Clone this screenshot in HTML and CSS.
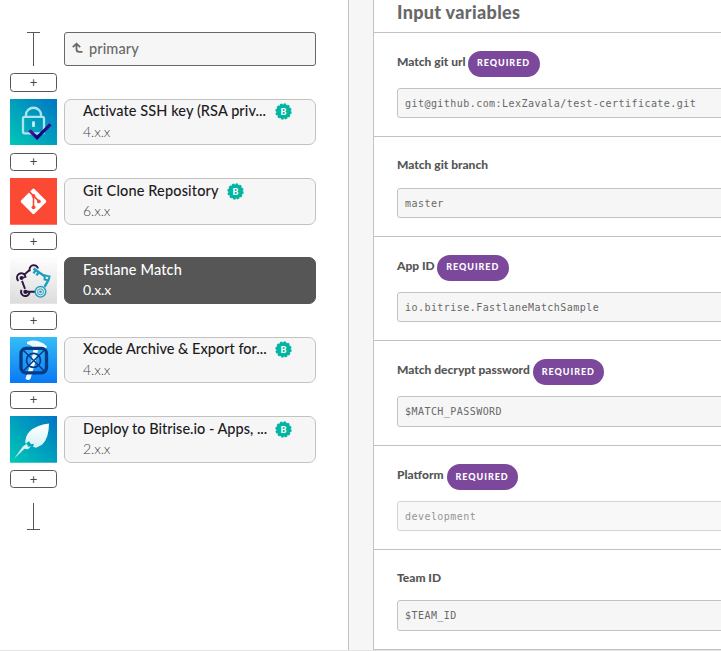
FILE: index.html
```html
<!DOCTYPE html>
<html lang="en">
<head>
<meta charset="utf-8">
<title>Workflow editor</title>
<link rel="stylesheet" href="styles.css">
</head>
<body>
<svg class="defs" width="0" height="0" aria-hidden="true">
  <defs>
    <linearGradient id="teal" x1="0" y1="1" x2="1" y2="0"><stop offset="0" stop-color="#00c9b7"/><stop offset="1" stop-color="#0075c4"/></linearGradient>
    <linearGradient id="blue" x1="0" y1="0" x2="0" y2="1"><stop offset="0" stop-color="#35bdf8"/><stop offset="1" stop-color="#0878f4"/></linearGradient>
    <linearGradient id="gray" x1="0" y1="0" x2="0" y2="1"><stop offset="0" stop-color="#fefefe"/><stop offset="1" stop-color="#dcdcdc"/></linearGradient>
    <linearGradient id="feather" x1="0" y1="0" x2="0" y2="1"><stop offset="0" stop-color="#ffffff"/><stop offset="1" stop-color="#c4ecf1"/></linearGradient>
    <linearGradient id="check" x1="0" y1="0" x2="1" y2="0"><stop offset="0" stop-color="#5a1296"/><stop offset=".4" stop-color="#12007c"/><stop offset="1" stop-color="#3a0d92"/></linearGradient>
    <symbol id="seal" viewBox="0 0 16 16">
      <circle cx="8" cy="8" r="6.9" fill="#00b5a1"/>
      <circle cx="8" cy="8" r="7" fill="none" stroke="#00b5a1" stroke-width="1.4" stroke-dasharray="2.3 1.365"/>
    </symbol>
  </defs>
</svg>
<div class="app">
  <section class="workflow">
    <div class="row start">
      <div class="cap cap-top"></div>
      <div class="primary">
        <svg width="12" height="12" viewBox="0 0 12 12" fill="none" stroke="#686868" stroke-width="1.8"><path d="M.8 5.200 4.500 1.700 8.200 5.200M4.500 2v5.200Q4.500 9.800 7.300 9.800H10.500"/></svg>
        <span>primary</span>
      </div>
    </div>
    <button class="add">+</button>
    <div class="row step">
      <svg class="icon" viewBox="0 0 47 47" preserveAspectRatio="none"><path fill="url(#teal)" d="M0 0h47v47H0z"/><g fill="none" stroke="#a9e4f0" stroke-width="2.3"><rect x="13" y="18" width="21" height="16.5" rx="1.5"/><path d="M16 18v-2.200a7.500 7 0 0 1 15 0V18"/></g><path stroke="#c8eff6" stroke-width="2.8" d="M23.500 22.500v5.500"/><path d="M19.500 31.500 27 39 40.500 25.500" fill="none" stroke="url(#check)" stroke-width="3.3"/></svg>
      <div class="card"><div class="title"><span class="t1">Activate SSH key (RSA priv...</span><span class="seal"><svg><use href="#seal"/></svg><b>B</b></span></div><div class="version">4.x.x</div></div>
    </div>
    <button class="add">+</button>
    <div class="row step">
      <svg class="icon" viewBox="0 0 47 47" preserveAspectRatio="none"><path fill="#fb4934" d="M0 0h47v47H0z"/><rect x="14" y="14" width="19" height="19" rx="1.7" fill="#fff" transform="rotate(45 23.5 23.5)"/><path d="m18.500 13 5 5 5.300 5.300M23.500 18v12" fill="none" stroke="#fb4934" stroke-width="1.6"/><g fill="#fb4934"><circle cx="23.500" cy="18" r="1.900"/><circle cx="23.500" cy="29.500" r="1.900"/><circle cx="28.800" cy="23.500" r="1.900"/></g></svg>
      <div class="card"><div class="title"><span class="t2">Git Clone Repository</span><span class="seal"><svg><use href="#seal"/></svg><b>B</b></span></div><div class="version">6.x.x</div></div>
    </div>
    <button class="add">+</button>
    <div class="row step">
      <svg class="icon" viewBox="0 0 47 47" preserveAspectRatio="none"><path fill="url(#gray)" d="M0 0h47v47H0z"/><g fill="none" stroke="#2e1740" stroke-width="1.9"><path d="M20 14.500A4.300 4.300 0 1 1 28 11.500M19 13.500l-5 4.500M8.500 24A4.300 4.300 0 1 1 15.500 20L11.500 21M12 24l3 8M11.500 33A4.300 4.300 0 1 0 19.500 36M15.500 35H25"/></g><g fill="#2e1740"><circle cx="11.500" cy="21" r="2"/><circle cx="15.500" cy="35" r="2.200"/></g><g fill="none" stroke="#1a9fc0"><path stroke-width="2.400" d="m23.500 11.500 11.500 8m-9.500-6-2 3m5-1-2 3M38 24l-3.500 6"/><path stroke-width="2" d="m35 18.500 4.500 1-1 4-4-1z"/><circle cx="30.500" cy="35" r="5.300" stroke-width="1.400"/><circle cx="30.500" cy="35" r="3" stroke-width=".9"/></g><circle cx="30.500" cy="35" r="1.300" fill="#1a9fc0"/></svg>
      <div class="card selected"><div class="title"><span class="t3">Fastlane Match</span></div><div class="version">0.x.x</div></div>
    </div>
    <button class="add">+</button>
    <div class="row step">
      <svg class="icon" viewBox="0 0 47 47" preserveAspectRatio="none"><path fill="url(#blue)" d="M0 0h47v47H0z"/><path fill="#f0faff" d="M17 5q6-2.500 12-.5 5 1.500 8 5l-2 3.500-4-2-3 2-2.500 12-5 17q-2 2.500-5 0l6-18 2-12q-1-4-6.500-5z"/><g fill="none" stroke="#053b86"><rect x="11" y="11.500" width="25.500" height="24.500" rx="5" stroke-width="3.300"/><circle cx="23.500" cy="23.500" r="7" stroke-width="1.700"/><path stroke-width="1.400" d="m12 12 23.500 23.500M35.500 12 12 35.500"/></g></svg>
      <div class="card"><div class="title"><span class="t4">Xcode Archive &amp; Export for...</span><span class="seal"><svg><use href="#seal"/></svg><b>B</b></span></div><div class="version">4.x.x</div></div>
    </div>
    <button class="add">+</button>
    <div class="row step">
      <svg class="icon" viewBox="0 0 47 47" preserveAspectRatio="none"><path fill="url(#teal)" d="M0 0h47v47H0z"/><path fill="url(#feather)" d="M39 7.500q0 15-7 21.500l-6 3-3-1 1-3-3 .5-2-3-3.500 2.500q-1-7 4-12.500 7-6.500 19.500-8M17 28l1 3 3-.5-3 3-3.500-.5L4 43l9-12.500z"/></svg>
      <div class="card"><div class="title"><span class="t5">Deploy to Bitrise.io - Apps, ...</span><span class="seal"><svg><use href="#seal"/></svg><b>B</b></span></div><div class="version">2.x.x</div></div>
    </div>
    <button class="add">+</button>
    <div class="cap cap-bottom"></div>
  </section>
  <div class="gutter"></div>
  <section class="inputs">
    <h2><span>Input variables</span></h2>
    <div class="field h104"><div class="label"><span>Match git url</span><em>REQUIRED</em></div><div class="value">git@github.com:LexZavala/test-certificate.git</div></div>
    <div class="field h100"><div class="label"><span>Match git branch</span></div><div class="value">master</div></div>
    <div class="field h104"><div class="label"><span>App ID</span><em>REQUIRED</em></div><div class="value">io.bitrise.FastlaneMatchSample</div></div>
    <div class="field h105"><div class="label"><span>Match decrypt password</span><em class="narrow">REQUIRED</em></div><div class="value tall">$MATCH_PASSWORD</div></div>
    <div class="field h104"><div class="label"><span>Platform</span><em class="narrow">REQUIRED</em></div><div class="value disabled">development</div></div>
    <div class="field h100"><div class="label"><span>Team ID</span></div><div class="value tall">$TEAM_ID</div></div>
  </section>
</div>
</body>
</html>
```
FILE: styles.css
```css
* { box-sizing: border-box; }
body { margin: 0; background: #fff; font-family: Lato, "Liberation Sans", sans-serif; overflow: hidden; }
.defs { display: block; width: 0; height: 0; }
.app { display: grid; grid-template-columns: 348px 26px 1fr; height: 651px; border-bottom: 1px solid #e4e4e4; overflow: hidden; }
.workflow { padding: 32px 0 0 10px; }
.row { display: flex; gap: 7px; }
.start { height: 34px; margin-bottom: 7.2px; }
.cap { width: 13px; margin: 0 17px; flex: none; display: flex; justify-content: center; }
.cap::before { content: ""; width: 1px; background: #565656; }
.cap-top { border-top: 1px solid #565656; }
.cap-bottom { border-bottom: 1px solid #565656; height: 27px; margin-top: 14.5px; }
.primary { width: 252px; height: 34px; border: 1px solid #686868; border-radius: 3px; background: #f6f6f6; display: flex; align-items: center; gap: 5px; padding: 0 7px 2px; color: #686868; font-size: 14.5px; font-weight: 500; letter-spacing: .1px; }
.add { display: flex; align-items: center; justify-content: center; width: 47px; height: 18.5px; margin: 0 0 7px; padding: 0; border: 1px solid #565656; border-radius: 3.5px; background: #fff; color: #444; font: 13px/1 Lato, sans-serif; }
.step { height: 46.75px; margin-bottom: 7.1px; }
.icon { width: 47px; height: 100%; flex: none; }
.card { width: 252px; height: 100%; border: 1px solid #c2c2c2; border-radius: 7px; background: #f6f6f6; padding: 1px 0 0 18px; }
.title { display: flex; align-items: center; gap: 8px; height: 20px; font-size: 14.5px; font-weight: 500; color: #1c1a1e; white-space: nowrap; }
.t1 { width: 184px; letter-spacing: .09px; }
.t2 { width: 136px; letter-spacing: .15px; }
.t3 { letter-spacing: .15px; }
.t4 { width: 184px; }
.t5 { width: 184px; }
.version { height: 22px; line-height: 22px; font-size: 14px; font-weight: 300; letter-spacing: -.1px; color: #444; }
.selected { background: #565656; border-color: #565656; }
.selected .title, .selected .version { color: #fff; }
.selected .version { font-weight: 400; }
.seal { display: grid; place-items: center; width: 17px; height: 17px; margin-top: 2px; }
.seal svg, .seal b { grid-area: 1 / 1; }
.seal svg { width: 17px; height: 17px; }
.seal b { color: #fff; font-size: 9px; line-height: 9px; font-weight: 900; }
.gutter { background: #f6f6f6; border: solid #c2c2c2; border-width: 0 1px; }
.inputs { min-width: 0; overflow: hidden; }
h2 { display: flex; margin: 0; height: 33px; padding: 1px 0 0 23px; border-bottom: 1px solid #c2c2c2; font-size: 18px; line-height: 22px; font-weight: 900; letter-spacing: .33px; color: #686868; }
.field { display: flex; flex-direction: column; justify-content: space-between; padding: 18px 0 18px 23px; border-bottom: 1px solid #c2c2c2; }
.h100 { height: 100px; }
.h104 { height: 104px; }
.h105 { height: 105px; }
.label { display: flex; gap: 2px; height: 26px; font-size: 12px; font-weight: 900; color: #565656; line-height: 22px; white-space: nowrap; }
.h100 .label { line-height: 20px; }
.label em { width: 72px; height: 26px; border-radius: 13px; background: #7b489b; color: #fff; font-style: normal; font-size: 9px; font-weight: 900; letter-spacing: .95px; line-height: 24px; text-align: center; }
.label .narrow { width: 71px; margin-left: 1px; line-height: 25px; }
.value { height: 30px; width: 400px; border: 1px solid #c2c2c2; border-radius: 3px; background: #f6f6f6; padding-left: 7px; font: 10px/29px "DejaVu Sans Mono", monospace; letter-spacing: .45px; color: #686868; }
.tall { height: 31px; }
.disabled { opacity: .7; }
```
